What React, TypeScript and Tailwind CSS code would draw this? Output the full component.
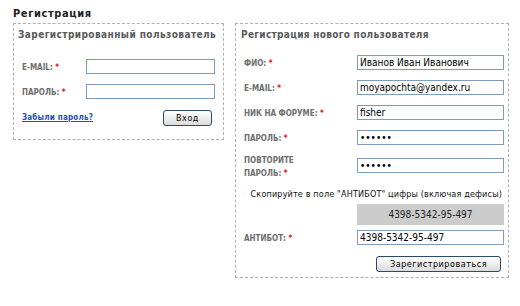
const font = { fontFamily: '"DejaVu Sans Condensed", "DejaVu Sans", Verdana, sans-serif' };

function Star() {
  return <span className="text-[#e01010]"> *</span>;
}

function Label({ children }: { children: React.ReactNode }) {
  return (
    <span className="text-[8px] font-bold uppercase leading-[10px] text-[#6e6e6e]">
      {children}
      <Star />
    </span>
  );
}

function Field({ value, width, type = "text" }: { value?: string; width: string; type?: string }) {
  return (
    <input
      type={type}
      defaultValue={value}
      readOnly
      className={`${width} h-[15px] border border-[#7f9db9] bg-white px-[2px] text-[10px] leading-[13px] text-black outline-none`}
      style={font}
    />
  );
}

function Button({ children, width }: { children: React.ReactNode; width: string }) {
  return (
    <button
      className={`${width} h-[16px] rounded-[3px] border border-[#2c4a66] bg-gradient-to-b from-white to-[#dcdcdc] text-[9px] leading-[14px] tracking-[0.5px] text-black`}
      style={font}
    >
      {children}
    </button>
  );
}

function Row({ label, children, h = "h-[25px]" }: { label: React.ReactNode; children: React.ReactNode; h?: string }) {
  return (
    <div className={`flex ${h} items-center`}>
      <div className="w-[113px] leading-[10px]">{label}</div>
      {children}
    </div>
  );
}

export default function App() {
  return (
    <div className="h-[306px] w-[520px] bg-white pl-[13px] pt-[7px]" style={font}>
      <h1 className="text-[11px] font-bold leading-[14px] tracking-[0.6px] text-[#1e1e1e]">Регистрация</h1>
      <div className="mt-[2px] flex items-start gap-[11px]">
        <div className="w-[211px] border border-dashed border-[#b0b0b0] pb-[9px] pl-[8px] pr-[8px] pt-[3px]">
          <h2 className="-ml-[4px] whitespace-nowrap text-[10px] font-bold leading-[16px] tracking-[0.42px] text-[#5a5a5a]">
            Зарегистрированный пользователь
          </h2>
          <div className="mt-[11px]">
            <div className="flex h-[25px] items-center">
              <div className="w-[64px] leading-[10px]"><Label>E-mail:</Label></div>
              <Field width="w-[129px]" />
            </div>
            <div className="flex h-[25px] items-center">
              <div className="w-[64px] leading-[10px]"><Label>Пароль:</Label></div>
              <Field width="w-[129px]" />
            </div>
            <div className="mt-[1px] flex h-[25px] items-center justify-between pr-[3px]">
              <a href="#" className="text-[8px] font-bold leading-[11px] tracking-[0.2px] text-[#1f4fb8] underline">
                Забыли пароль?
              </a>
              <Button width="w-[49px]">Вход</Button>
            </div>
          </div>
        </div>

        <div className="w-[274px] border border-dashed border-[#b0b0b0] pb-[5px] pl-[8px] pr-[4px] pt-[3px]">
          <h2 className="-ml-[3px] whitespace-nowrap text-[10px] font-bold leading-[16px] tracking-[0.3px] text-[#5a5a5a]">
            Регистрация нового пользователя
          </h2>
          <div className="mt-[7px]">
            <Row label={<Label>ФИО:</Label>}>
              <Field width="w-[147px]" value="Иванов Иван Иванович" />
            </Row>
            <Row label={<Label>E-mail:</Label>}>
              <Field width="w-[147px]" value="moyapochta@yandex.ru" />
            </Row>
            <Row label={<Label>Ник на форуме:</Label>}>
              <Field width="w-[147px]" value="fisher" />
            </Row>
            <Row label={<Label>Пароль:</Label>}>
              <Field width="w-[147px]" type="password" value="123456" />
            </Row>
            <Row h="h-[31px]" label={<div className="w-[60px]"><Label>Повторите пароль:</Label></div>}>
              <Field width="w-[147px]" type="password" value="123456" />
            </Row>
            <p className="mt-[7px] whitespace-nowrap pr-[2px] text-right text-[9px] leading-[12px] tracking-[0.15px] text-[#111]">
              Скопируйте в поле "АНТИБОТ" цифры (включая дефисы)
            </p>
            <div className="ml-[113px] mt-[4px] flex h-[21px] w-[147px] items-center justify-center bg-[#cccccc] text-[10px] text-[#222]">
              4398-5342-95-497
            </div>
            <div className="mt-[5px]">
              <Row h="h-[15px]" label={<Label>Антибот:</Label>}>
                <Field width="w-[147px]" value="4398-5342-95-497" />
              </Row>
            </div>
            <div className="mt-[11px] flex justify-end pr-[3px]">
              <Button width="w-[125px]">Зарегистрироваться</Button>
            </div>
          </div>
        </div>
      </div>
    </div>
  );
}
